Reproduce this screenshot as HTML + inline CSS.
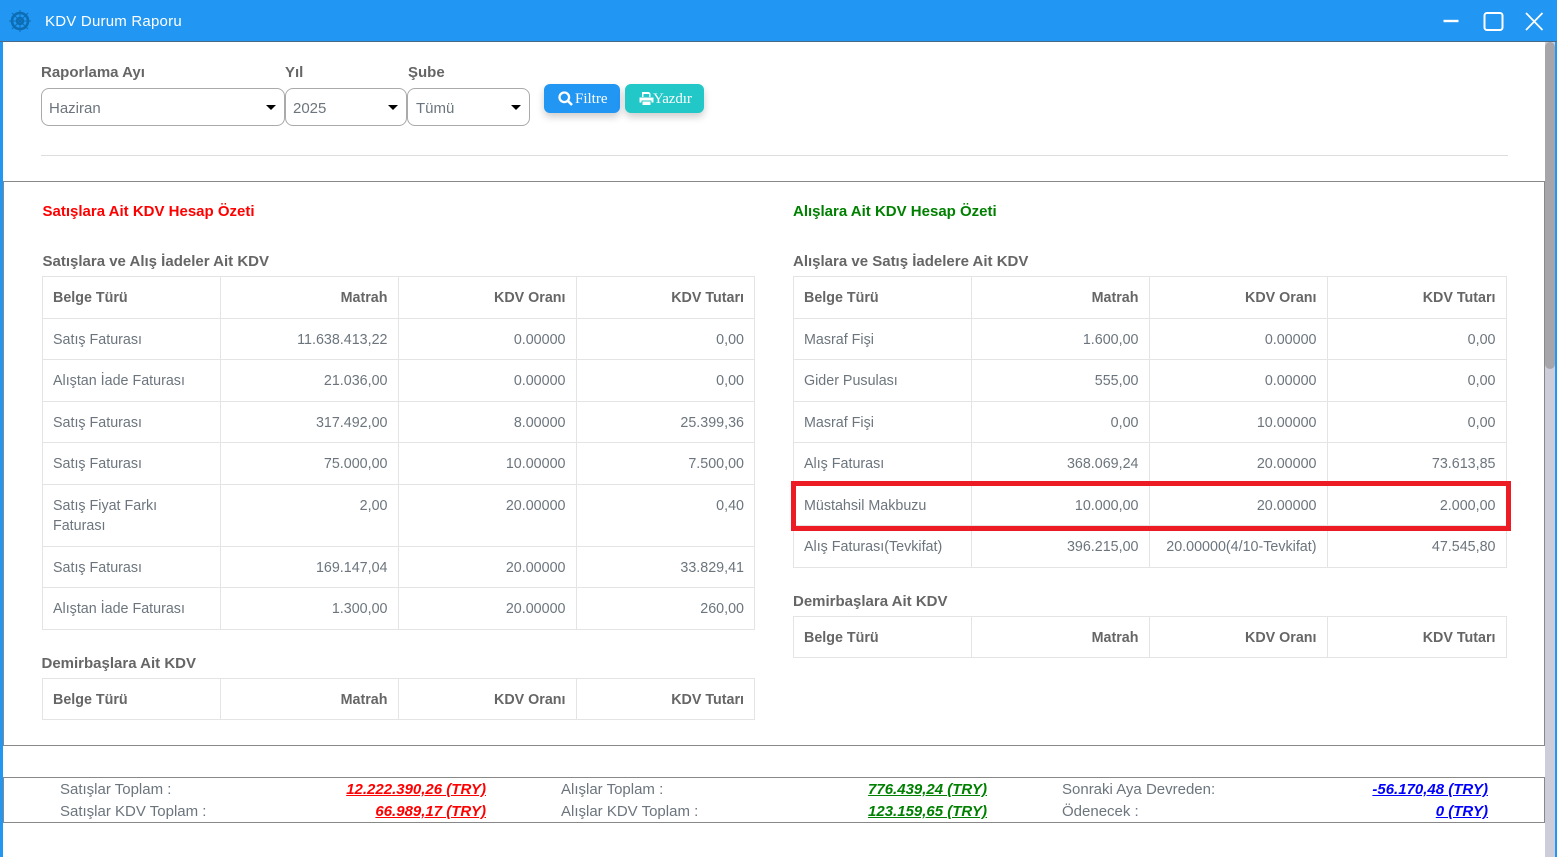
<!DOCTYPE html>
<html lang="tr"><head><meta charset="utf-8"><title>KDV Durum Raporu</title>
<style>
*{box-sizing:border-box}
html,body{margin:0;padding:0;width:1557px;height:857px;overflow:hidden;background:#fff}
body{position:relative;font-family:"Liberation Sans",Arial,sans-serif;font-size:14px;color:#6c757d}
.abs{position:absolute;white-space:nowrap}
.bar{left:0;top:0;width:1557px;height:42px;background:#2196f3;border-bottom:1px solid #4a6a88}
.lbl{font-weight:700;color:#666;font-size:15px;line-height:16px}
.sel{height:38px;top:88px;border:1px solid #aaa;border-radius:8px;background:#fff;font-size:15px;line-height:38px;padding-left:7px;color:#6c757d}
.sel span{position:relative;top:1px}
.sel i{position:absolute;right:8px;top:16px;width:0;height:0;border-left:5px solid transparent;border-right:5px solid transparent;border-top:5px solid #000}
.btn{top:84px;height:29px;border-radius:6px;color:#fff;font-family:"Liberation Serif",serif;font-size:15px;line-height:29px;box-shadow:0 4px 8px rgba(0,0,0,.2)}
.hl{font-weight:700;font-size:15px;line-height:16px}
table{position:absolute;border-collapse:collapse;table-layout:fixed;font-size:14.3px;color:#6c757d}
td,th{border:1px solid #e4e4e4;padding:11px 10.5px 0 10px;vertical-align:top;text-align:right;font-weight:400;line-height:20px;overflow:hidden}
th{font-weight:700;color:#666}
td:first-child,th:first-child{text-align:left}
.l td:last-child,.l th:last-child{padding-right:10px}
.sum{font-size:15px;line-height:22px;color:#6c757d}
.val{font-size:15px;line-height:22px;font-weight:700;font-style:italic;text-decoration:underline;text-align:right}
.panel{border:1px solid #888}
</style></head><body>

<div class="abs bar"></div>
<svg class="abs" style="left:8px;top:8px" width="24" height="26" viewBox="0 0 24 26" fill="none" stroke="#0d6db3">
<circle cx="12" cy="13" r="8" stroke-width="2.6"/><circle cx="12" cy="13" r="3.2" stroke-width="2"/>
<path d="M12 2v22M1 13h22M4 5l16 16M20 5L4 21" stroke-width="1"/><circle cx="12" cy="13" r="1.6" fill="#0d6db3" stroke="none"/>
</svg>
<div class="abs" style="left:45px;top:12.500px;color:#fff;font-size:15px;line-height:18px;letter-spacing:.22px">KDV Durum Raporu</div>
<svg class="abs" style="left:1440px;top:8px" width="112" height="26" fill="none" stroke="#fff">
<path d="M3.500 13h15" stroke-width="2.400"/><rect x="44.500" y="5" width="18" height="17" rx="2.500" stroke-width="2"/><path d="M86 5l16.500 17M102.500 5L86 22" stroke-width="1.700"/>
</svg>

<div class="abs" style="left:0;top:42px;width:3px;height:815px;background:#2196f3"></div>
<div class="abs" style="left:1545px;top:42px;width:10px;height:815px;background:#cdcdd9"></div>
<div class="abs" style="left:1545px;top:42px;width:10px;height:327px;background:#a5a5aa;border-radius:5px"></div>
<div class="abs" style="left:1555px;top:42px;width:2px;height:815px;background:#2196f3"></div>

<div class="abs lbl" style="left:41px;top:65px">Raporlama Ayı</div>
<div class="abs lbl" style="left:285px;top:65px">Yıl</div>
<div class="abs lbl" style="left:408px;top:65px">Şube</div>
<div class="abs sel" style="left:41px;width:244px"><span>Haziran</span><i></i></div>
<div class="abs sel" style="left:285px;width:122px"><span>2025</span><i></i></div>
<div class="abs sel" style="left:407px;width:123px;padding-left:8px"><span>Tümü</span><i></i></div>

<div class="abs btn" style="left:544px;width:76px;background:#2196f3">
<svg class="abs" style="left:14px;top:7px" width="15" height="15" fill="none" stroke="#fff"><circle cx="6.300" cy="6.300" r="4.800" stroke-width="2.300"/><path d="M10 10l4 4" stroke-width="2.600"/></svg>
<span class="abs" style="left:31px;top:.5px">Filtre</span></div>
<div class="abs btn" style="left:625px;width:79px;background:#22c7c7">
<svg class="abs" style="left:14px;top:7px" width="15" height="15" fill="#fff"><path d="M3 1h7L11.500 2.500V6H10.200V3H4.500v3H3zM0.500 6.500h14v5H12.500V9.500h-10v2H.5zM3.500 10.500h8V14h-8z"/></svg>
<span class="abs" style="left:28px;top:.5px;letter-spacing:-.1px">Yazdır</span></div>

<div class="abs" style="left:41px;top:155px;width:1467px;height:1px;background:#ddd"></div>
<div class="abs panel" style="left:3px;top:181px;width:1542px;height:565px"></div>

<div class="abs hl" style="left:42.500px;top:204px;color:#f00">Satışlara Ait KDV Hesap Özeti</div>
<div class="abs hl" style="left:793px;top:204px;color:#008000">Alışlara Ait KDV Hesap Özeti</div>
<div class="abs hl" style="left:42.500px;top:254px;color:#666">Satışlara ve Alış İadeler Ait KDV</div>
<div class="abs hl" style="left:793px;top:254px;color:#666">Alışlara ve Satış İadelere Ait KDV</div>

<table class="l" style="left:42px;top:276px;width:712px">
<colgroup><col style="width:178px"><col style="width:178px"><col style="width:178px"><col style="width:178px"></colgroup>
<tr style="height:42px"><th>Belge Türü</th><th>Matrah</th><th>KDV Oranı</th><th>KDV Tutarı</th></tr>
<tr style="height:41px"><td>Satış Faturası</td><td>11.638.413,22</td><td>0.00000</td><td>0,00</td></tr>
<tr style="height:42px"><td>Alıştan İade Faturası</td><td>21.036,00</td><td>0.00000</td><td>0,00</td></tr>
<tr style="height:41px"><td>Satış Faturası</td><td>317.492,00</td><td>8.00000</td><td>25.399,36</td></tr>
<tr style="height:42px"><td>Satış Faturası</td><td>75.000,00</td><td>10.00000</td><td>7.500,00</td></tr>
<tr style="height:62px"><td>Satış Fiyat Farkı<br>Faturası</td><td>2,00</td><td>20.00000</td><td>0,40</td></tr>
<tr style="height:41px"><td>Satış Faturası</td><td>169.147,04</td><td>20.00000</td><td>33.829,41</td></tr>
<tr style="height:42px"><td>Alıştan İade Faturası</td><td>1.300,00</td><td>20.00000</td><td>260,00</td></tr>
</table>

<div class="abs hl" style="left:41.500px;top:656px;color:#666">Demirbaşlara Ait KDV</div>
<table class="l" style="left:42px;top:678px;width:712px">
<colgroup><col style="width:178px"><col style="width:178px"><col style="width:178px"><col style="width:178px"></colgroup>
<tr style="height:41px"><th>Belge Türü</th><th>Matrah</th><th>KDV Oranı</th><th>KDV Tutarı</th></tr>
</table>

<table style="left:793px;top:276px;width:713px">
<colgroup><col style="width:178px"><col style="width:178px"><col style="width:178px"><col style="width:179px"></colgroup>
<tr style="height:42px"><th>Belge Türü</th><th>Matrah</th><th>KDV Oranı</th><th>KDV Tutarı</th></tr>
<tr style="height:41px"><td>Masraf Fişi</td><td>1.600,00</td><td>0.00000</td><td>0,00</td></tr>
<tr style="height:42px"><td>Gider Pusulası</td><td>555,00</td><td>0.00000</td><td>0,00</td></tr>
<tr style="height:41px"><td>Masraf Fişi</td><td>0,00</td><td>10.00000</td><td>0,00</td></tr>
<tr style="height:42px"><td>Alış Faturası</td><td>368.069,24</td><td>20.00000</td><td>73.613,85</td></tr>
<tr style="height:41px"><td>Müstahsil Makbuzu</td><td>10.000,00</td><td>20.00000</td><td>2.000,00</td></tr>
<tr style="height:42px"><td>Alış Faturası(Tevkifat)</td><td>396.215,00</td><td style="padding-left:0;white-space:nowrap">20.00000(4/10-Tevkifat)</td><td>47.545,80</td></tr>
</table>

<div class="abs" style="left:791px;top:481px;width:720px;height:50px;border:5px solid #ed1c24"></div>

<div class="abs hl" style="left:793px;top:594px;color:#666">Demirbaşlara Ait KDV</div>
<table style="left:793px;top:616px;width:713px">
<colgroup><col style="width:178px"><col style="width:178px"><col style="width:178px"><col style="width:179px"></colgroup>
<tr style="height:41px"><th>Belge Türü</th><th>Matrah</th><th>KDV Oranı</th><th>KDV Tutarı</th></tr>
</table>

<div class="abs panel" style="left:3px;top:777px;width:1542px;height:46px"></div>

<div class="abs sum" style="left:60px;top:779px">Satışlar Toplam :</div>
<div class="abs sum" style="left:60px;top:801px">Satışlar KDV Toplam :</div>
<div class="abs val" style="right:1071px;top:779px;color:#f00">12.222.390,26 (TRY)</div>
<div class="abs val" style="right:1071px;top:801px;color:#f00">66.989,17 (TRY)</div>
<div class="abs sum" style="left:561px;top:779px">Alışlar Toplam :</div>
<div class="abs sum" style="left:561px;top:801px">Alışlar KDV Toplam :</div>
<div class="abs val" style="right:570px;top:779px;color:#008000">776.439,24 (TRY)</div>
<div class="abs val" style="right:570px;top:801px;color:#008000">123.159,65 (TRY)</div>
<div class="abs sum" style="left:1062px;top:779px">Sonraki Aya Devreden:</div>
<div class="abs sum" style="left:1062px;top:801px">Ödenecek :</div>
<div class="abs val" style="right:69px;top:779px;color:#00f">-56.170,48 (TRY)</div>
<div class="abs val" style="right:69px;top:801px;color:#00f">0 (TRY)</div>
</body></html>
